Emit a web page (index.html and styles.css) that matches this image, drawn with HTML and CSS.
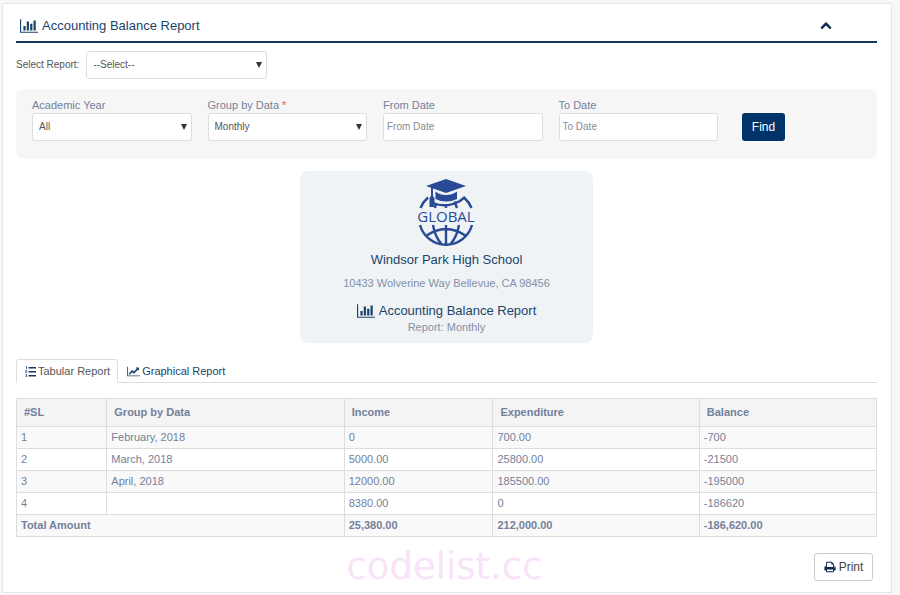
FILE: index.html
```html
<!DOCTYPE html>
<html lang="en">
<head>
<meta charset="utf-8">
<meta name="viewport" content="width=device-width, initial-scale=1">
<title>Accounting Balance Report</title>
<link rel="stylesheet" href="styles.css">
</head>
<body>
<svg width="0" height="0" class="sprite" aria-hidden="true">
  <symbol id="bar-chart" viewBox="0 0 2048 1792"><path d="M640 896v512h-256v-512h256zm384-512v1024h-256v-1024h256zm1024 1152v128h-2048v-1536h128v1408h1920zm-640-896v768h-256v-768h256zm384-384v1152h-256v-1152h256z"/></symbol>
  <symbol id="line-chart" viewBox="0 0 2048 1792"><path d="M2048 1536v128h-2048v-1536h128v1408h1920zm-128-1248v435q0 21-19.5 29.5t-35.5-7.5l-121-121-633 633q-10 10-23 10t-23-10l-233-233-416 416-192-192 585-585q10-10 23-10t23 10l233 233 464-464-121-121q-16-16-7.5-35.5t29.5-19.5h435q14 0 23 9t9 23z"/></symbol>
  <symbol id="print" viewBox="0 0 1792 1792"><path d="M448 1536h896v-256h-896v256zm0-640h896v-384h-160q-40 0-68-28t-28-68v-160h-640v640zm1152 64q0-26-19-45t-45-19-45 19-19 45 19 45 45 19 45-19 19-45zm128 0v416q0 13-9.5 22.5t-22.5 9.5h-224v160q0 40-28 68t-68 28h-960q-40 0-68-28t-28-68v-160h-224q-13 0-22.5-9.5t-9.5-22.5v-416q0-79 56.5-135.5t135.5-56.5h64v-544q0-40 28-68t68-28h672q40 0 88 20t76 48l152 152q28 28 48 76t20 88v256h64q79 0 135.5 56.5t56.5 135.5z"/></symbol>
  <symbol id="chevron-up" viewBox="0 0 1792 1792"><path d="M1683 1331l-166 165q-19 19-45 19t-45-19l-531-531-531 531q-19 19-45 19t-45-19l-166-165q-19-19-19-45.5t19-45.5l742-741q19-19 45-19t45 19l742 741q19 19 19 45.5t-19 45.5z"/></symbol>
  <symbol id="list" viewBox="0 0 11 11"><path d="M3.5 1h7.5v1.500h-7.500zM3.500 5h7.500v1.500h-7.500zM3.500 9h7.500v1.500h-7.500z"/><path fill-opacity=".7" d="M1 0h1v3h-1zM.5 4h1.500v1.500l-1 1h1v.5h-2v-1l1-1h-.5zM.3 8h1.700v3h-1.700v-.7h.8v-.5h-.6v-.5h.6v-.6h-.5z"/></symbol>
</svg>

<main class="panel">
  <header class="panel-head">
    <h1 class="title"><svg class="icon icon-chart"><use href="#bar-chart"/></svg>Accounting Balance Report</h1>
    <button type="button" class="collapse" aria-label="Collapse"><svg class="icon icon-chevron"><use href="#chevron-up"/></svg></button>
  </header>

  <div class="picker">
    <label for="report">Select Report:</label>
    <span class="select"><select id="report"><option>--Select--</option></select></span>
  </div>

  <form class="filters">
    <div class="field">
      <label for="year">Academic Year</label>
      <span class="select"><select id="year"><option>All</option></select></span>
    </div>
    <div class="field">
      <label for="group">Group by Data <span class="required">*</span></label>
      <span class="select"><select id="group"><option>Monthly</option></select></span>
    </div>
    <div class="field">
      <label for="from">From Date</label>
      <input id="from" type="text" placeholder="From Date">
    </div>
    <div class="field">
      <label for="to">To Date</label>
      <input id="to" type="text" placeholder="To Date">
    </div>
    <div class="action"><button type="button" class="find">Find</button></div>
  </form>

  <section class="school">
    <svg class="logo" viewBox="0 0 60 68" role="img" aria-label="Global">
      <g fill="none" stroke="#2a4a96" stroke-width="2.400">
        <path d="M4.500 29A27 27 0 0 1 12 18.500M48 18.500A27 27 0 0 1 55.500 29"/>
        <path d="M19 29L20 25M30 29V25M41 29L38.500 22.500M17 24Q30 29.500 44 22L49 18"/>
        <path d="M4 46A27 27 0 0 0 56 46"/>
        <path d="M30 46V65M17 46Q19 58 25.500 65M43 46Q41 58 34.500 65M10 57Q30 43 50 57"/>
      </g>
      <g fill="#2a4a96">
        <path d="M30 0L50 7L30 14L10 7Z"/>
        <path d="M19.500 12.500Q24 16 30 16T41 12.500V20Q30 25 19.500 20Z"/>
        <path d="M15 8h2v9l1.500 2v9h-5v-9l1.500-2z"/>
      </g>
      <text x="30" y="43" text-anchor="middle">GLOBAL</text>
    </svg>
    <h2 class="school-name">Windsor Park High School</h2>
    <p class="address">10433 Wolverine Way Bellevue, CA 98456</p>
    <h3 class="report-name"><svg class="icon icon-chart"><use href="#bar-chart"/></svg>Accounting Balance Report</h3>
    <p class="report-kind">Report: Monthly</p>
  </section>

  <nav class="tabs">
    <a href="#tabular" class="tab active"><svg class="icon icon-list"><use href="#list"/></svg>Tabular Report</a>
    <a href="#graphical" class="tab"><svg class="icon icon-line"><use href="#line-chart"/></svg>Graphical Report</a>
  </nav>

  <table id="tabular">
    <colgroup><col class="c-sl"><col class="c-group"><col class="c-income"><col class="c-spend"><col></colgroup>
    <thead>
      <tr><th>#SL</th><th>Group by Data</th><th>Income</th><th>Expenditure</th><th>Balance</th></tr>
    </thead>
    <tbody>
      <tr><td>1</td><td>February, 2018</td><td>0</td><td>700.00</td><td>-700</td></tr>
      <tr><td>2</td><td>March, 2018</td><td>5000.00</td><td>25800.00</td><td>-21500</td></tr>
      <tr><td>3</td><td>April, 2018</td><td>12000.00</td><td>185500.00</td><td>-195000</td></tr>
      <tr><td>4</td><td></td><td>8380.00</td><td>0</td><td>-186620</td></tr>
      <tr class="total"><td colspan="2">Total Amount</td><td>25,380.00</td><td>212,000.00</td><td>-186,620.00</td></tr>
    </tbody>
  </table>

  <footer class="foot">
    <span class="watermark">codelist.cc</span>
    <button type="button" class="print"><svg class="icon icon-print"><use href="#print"/></svg>Print</button>
  </footer>
</main>
</body>
</html>
```
FILE: styles.css
```css
* { box-sizing: border-box; }

body {
  margin: 0;
  padding: 3px 8px 2px 2px;
  background: #f7f7f7;
  color: #73819c;
  font: 11px/16px "Liberation Sans", Arial, sans-serif;
}

h1, h2, h3, p { margin: 0; font-weight: 400; }
button, input, select { font: inherit; }
.sprite { position: absolute; }
.icon { fill: currentColor; flex: none; }
.icon-chart { width: 18px; height: 16px; }
.icon-chevron { width: 12px; height: 12px; }
.icon-list { width: 11px; height: 11px; }
.icon-line { width: 13px; height: 11px; }
.icon-print { width: 12px; height: 12px; }

.panel {
  padding: 0 14px 11px 13px;
  background: #fff;
  border: 1px solid #e6e6e6;
}

.panel-head {
  display: flex;
  align-items: center;
  justify-content: space-between;
  height: 39px;
  padding: 7px 45px 0 4px;
  border-bottom: 2px solid #14375f;
}

.title, .report-name {
  display: flex;
  align-items: center;
  gap: 4px;
  color: #1a446c;
  font-size: 13px;
}

.collapse {
  display: flex;
  padding: 0 0 3px;
  border: 0;
  background: none;
  color: #0b2b50;
}

.picker {
  display: flex;
  align-items: center;
  gap: 7px;
  padding: 8px 0 10px;
  color: #555;
  font-size: 10px;
}

.picker .select { width: 181px; }

.select { position: relative; display: block; }

.select::after {
  content: "";
  position: absolute;
  top: 11px;
  right: 5px;
  border: 3px solid transparent;
  border-top: 6px solid #333;
  border-bottom: 0;
  pointer-events: none;
}

select, input {
  display: block;
  width: 100%;
  height: 28px;
  padding: 0 6px;
  border: 1px solid #ddd;
  border-radius: 3px;
  background: #fff;
  color: #555;
  font-size: 10px;
  appearance: none;
}

input { padding: 0 3px 1px; }
input::placeholder { color: #8b8b8b; opacity: 1; }

.filters {
  display: flex;
  align-items: flex-end;
  gap: 16px;
  padding: 8px 16px 18px;
  border-radius: 8px;
  background: #f6f6f6;
}

.field { flex: 1; }
.field label { display: block; }
.required { color: #e8603c; }
.action { width: 127px; padding-left: 8px; }

.find {
  display: block;
  width: 43px;
  height: 28px;
  padding: 0;
  border: 0;
  border-radius: 3px;
  background: #003468;
  color: #fff;
  font-size: 12px;
}

.school {
  display: flex;
  flex-direction: column;
  align-items: center;
  width: 34%;
  margin: 12px auto 16px;
  padding: 8px 0;
  border-radius: 8px;
  background: #eff3f6;
}

.logo { width: 60px; height: 68px; }
.logo text { fill: #2a4a96; font: 15px "Open Sans", sans-serif; }
.school-name { color: #1a446c; font-size: 13px; line-height: 26px; }
.address { line-height: 20px; color: #8591a8; }
.report-name { margin-top: 10px; }
.report-kind { color: #8591a8; }

.tabs { display: flex; border-bottom: 1px solid #ddd; }

.tab {
  display: flex;
  align-items: center;
  gap: 2px;
  height: 24px;
  margin-bottom: -1px;
  padding: 0 7px 0 8px;
  border: 1px solid transparent;
  border-radius: 3px 3px 0 0;
  color: #1a446c;
  text-decoration: none;
}

.tab.active {
  border-color: #ddd;
  border-bottom-color: #fff;
  background: #fff;
  color: #555;
}

.active .icon { color: #123a63; }

table {
  width: 100%;
  margin-top: 15px;
  border-collapse: collapse;
  table-layout: fixed;
}

.c-sl { width: 10.5%; }
.c-group { width: 27.6%; }
.c-income { width: 17.3%; }
.c-spend { width: 24%; }

th, td {
  height: 22px;
  padding: 0 4px 2px;
  border: 1px solid #ddd;
  text-align: left;
}

th { height: 28px; padding: 0 7px 2px; background: #f4f4f4; }
tbody tr:nth-child(odd) { background: #f9f9f9; }
.total td { font-weight: 700; }

.foot {
  display: grid;
  grid-template-columns: 1fr auto 1fr;
  align-items: end;
  min-height: 36px;
  margin-top: 8px;
  padding-right: 4px;
}

.watermark {
  grid-column: 2;
  color: #f9e3f9;
  font: 37px/28px "DejaVu Sans", sans-serif;
}

.print {
  display: flex;
  align-items: center;
  justify-content: center;
  justify-self: end;
  gap: 3px;
  width: 59px;
  height: 28px;
  padding: 0;
  border: 1px solid #ccc;
  border-radius: 3px;
  background: #fff;
  color: #444;
  font-size: 12px;
}

.print .icon { color: #0b2b50; }
```
